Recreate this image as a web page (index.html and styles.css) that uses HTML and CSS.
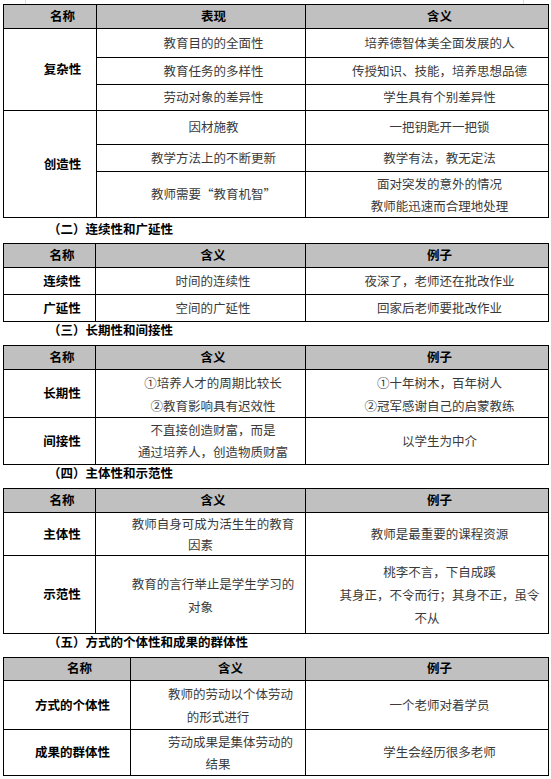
FILE: index.html
```html
<!DOCTYPE html>
<html lang="zh-CN">
<head>
<meta charset="utf-8">
<title>教师劳动的特点</title>
<link rel="stylesheet" href="styles.css">
</head>
<body>
<div class="page">
  <div class="marks"><span></span><span></span></div>

  <table class="t t1">
    <colgroup><col class="c1"><col class="c2"><col class="c3"></colgroup>
    <tr class="r24"><th>名称</th><th>表现</th><th>含义</th></tr>
    <tr class="r29"><td rowspan="3" class="nm">复杂性</td><td>教育目的的全面性</td><td>培养德智体美全面发展的人</td></tr>
    <tr class="r27"><td>教育任务的多样性</td><td>传授知识、技能，培养思想品德</td></tr>
    <tr class="r26"><td>劳动对象的差异性</td><td>学生具有个别差异性</td></tr>
    <tr class="r34"><td rowspan="3" class="nm">创造性</td><td>因材施教</td><td>一把钥匙开一把锁</td></tr>
    <tr class="r27"><td>教学方法上的不断更新</td><td>教学有法，教无定法</td></tr>
    <tr class="r46"><td>教师需要“教育机智”</td><td class="ml22"><p>面对突发的意外的情况</p><p>教师能迅速而合理地处理</p></td></tr>
  </table>

  <div class="h h-first">（二）连续性和广延性</div>
  <table class="t t2">
    <colgroup><col class="c1"><col class="c2"><col class="c3"></colgroup>
    <tr class="r24"><th>名称</th><th>含义</th><th>例子</th></tr>
    <tr class="r27"><td class="nm">连续性</td><td>时间的连续性</td><td>夜深了，老师还在批改作业</td></tr>
    <tr class="r27"><td class="nm">广延性</td><td>空间的广延性</td><td>回家后老师要批改作业</td></tr>
  </table>

  <div class="h">（三）长期性和间接性</div>
  <table class="t t2">
    <colgroup><col class="c1"><col class="c2"><col class="c3"></colgroup>
    <tr class="r24"><th>名称</th><th>含义</th><th>例子</th></tr>
    <tr class="r48"><td class="nm">长期性</td><td class="ml23"><p>①培养人才的周期比较长</p><p>②教育影响具有迟效性</p></td><td class="ml23"><p>①十年树木，百年树人</p><p>②冠军感谢自己的启蒙教练</p></td></tr>
    <tr class="r47"><td class="nm">间接性</td><td class="ml22"><p>不直接创造财富，而是</p><p>通过培养人，创造物质财富</p></td><td>以学生为中介</td></tr>
  </table>

  <div class="h">（四）主体性和示范性</div>
  <table class="t t2">
    <colgroup><col class="c1"><col class="c2"><col class="c3"></colgroup>
    <tr class="r24"><th>名称</th><th>含义</th><th>例子</th></tr>
    <tr class="r43"><td class="nm">主体性</td><td class="ml21">教师自身可成为活生生的教育因素</td><td>教师是最重要的课程资源</td></tr>
    <tr class="r78"><td class="nm">示范性</td><td class="ml23">教育的言行举止是学生学习的对象</td><td class="ml23"><p>桃李不言，下自成蹊</p><p>其身正，不令而行；其身不正，虽令不从</p></td></tr>
  </table>

  <div class="h">（五）方式的个体性和成果的群体性</div>
  <table class="t t5">
    <colgroup><col class="c1"><col class="c2"><col class="c3"></colgroup>
    <tr class="r23"><th>名称</th><th>含义</th><th>例子</th></tr>
    <tr class="r49"><td class="nm nm-s">方式的个体性</td><td class="ml23">教师的劳动以个体劳动的形式进行</td><td>一个老师对着学员</td></tr>
    <tr class="r46"><td class="nm nm-s">成果的群体性</td><td class="ml22">劳动成果是集体劳动的结果</td><td>学生会经历很多老师</td></tr>
  </table>
</div>
</body>
</html>
```

FILE: styles.css
```css
html, body {
  margin: 0;
  padding: 0;
  background: #ffffff;
}

body {
  font-family: "Noto Sans CJK SC", "Noto Sans CJK JP", sans-serif;
  font-size: 12.5px;
  color: #3a3a3a;
}

.page {
  padding-left: 3px;
  width: 545px;
}

.marks {
  height: 4px;
  display: flex;
  justify-content: space-between;
  padding: 0 24px 0 22px;
}

.marks span {
  width: 1px;
  background: #dcdcdc;
}

.t {
  border-collapse: collapse;
  table-layout: fixed;
  width: 545px;
}

.t1 .c1 { width: 93px; }
.t1 .c2 { width: 209px; }
.t1 .c3 { width: 243px; }

.t2 .c1 { width: 92px; }
.t2 .c2 { width: 210px; }
.t2 .c3 { width: 243px; }

.t5 .c1 { width: 127px; }
.t5 .c2 { width: 175px; }
.t5 .c3 { width: 243px; }

.t td,
.t th {
  border: 1px solid #000000;
  padding: 0 7px 2px;
  text-align: center;
  vertical-align: middle;
  text-indent: 2em;
  line-height: 17px;
  font-weight: normal;
}

.t th {
  background: #c0c0c0;
  color: #000000;
  font-weight: bold;
  padding-bottom: 3px;
}

.t td.ml21 { line-height: 21px; padding-bottom: 0; }
.t td.ml22 { line-height: 22px; padding-bottom: 0; }
.t td.ml23 { line-height: 23px; padding-bottom: 0; }

.t p {
  margin: 0;
}

.t .nm {
  font-weight: bold;
  color: #000000;
}

.t .nm-s {
  text-indent: 11px;
}

.r23 { height: 23px; }
.r24 { height: 24px; }
.r26 { height: 26px; }
.r27 { height: 27px; }
.r29 { height: 29px; }
.r34 { height: 34px; }
.r43 { height: 43px; }
.r46 { height: 46px; }
.r47 { height: 47px; }
.r48 { height: 48px; }
.r49 { height: 49px; }
.r78 { height: 78px; }

.h {
  height: 16px;
  line-height: 16px;
  margin-bottom: 7px;
  padding-left: 45px;
  font-weight: bold;
  color: #000000;
}

.h-first {
  padding-top: 3px;
  margin-bottom: 6px;
}
```
